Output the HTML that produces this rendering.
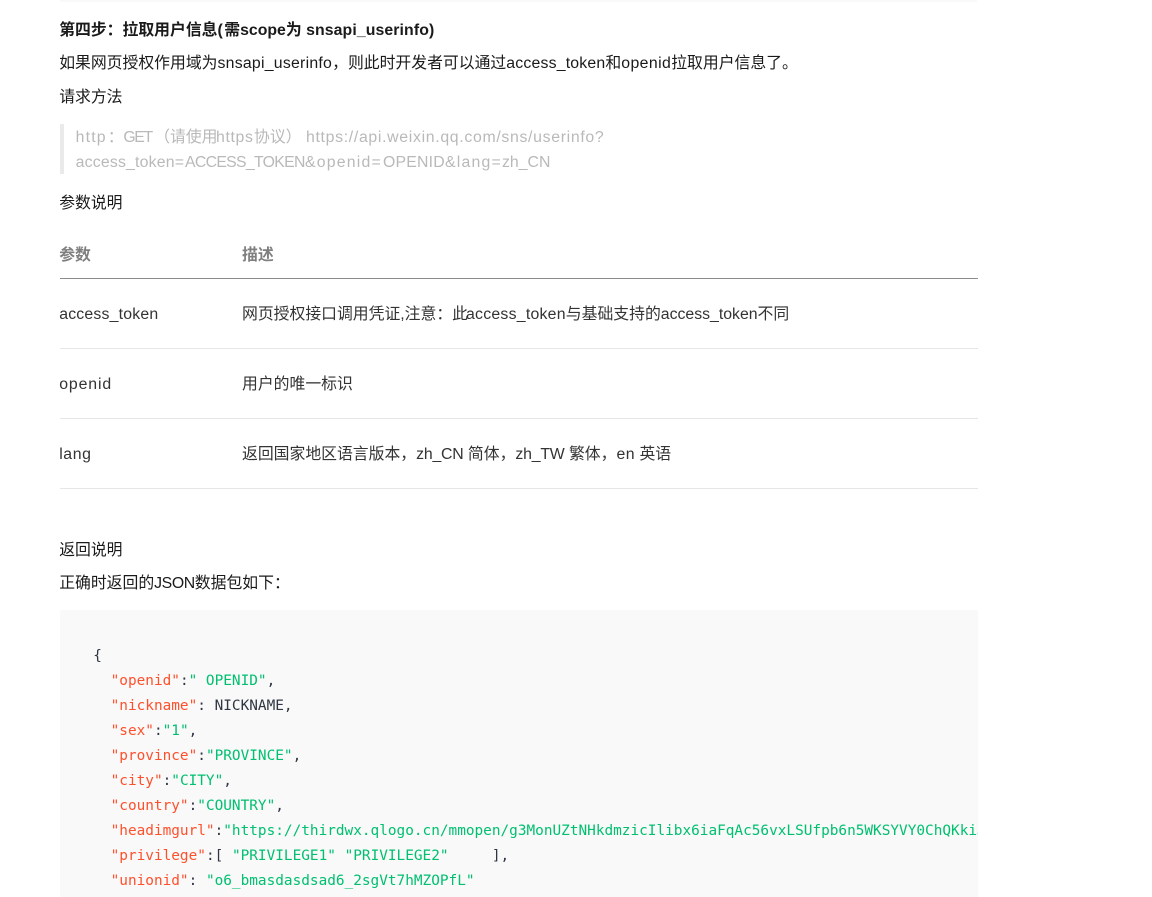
<!DOCTYPE html>
<html><head><meta charset="utf-8">
<style>
html,body{margin:0;padding:0;background:#fff;}
body{width:1152px;height:897px;position:relative;overflow:hidden;font-family:"Liberation Sans","Noto Sans CJK SC",sans-serif;font-size:15.84px;color:#262626;}
.t{position:absolute;white-space:nowrap;line-height:25px;}
.r{position:absolute;left:60px;width:918px;}
.c{position:absolute;left:60px;top:610px;width:918px;height:287px;background:#f9f9f9;overflow:hidden;}
.m{position:absolute;left:33.3px;white-space:pre;font-family:"DejaVu Sans Mono","Liberation Mono",monospace;font-size:14.4px;line-height:25px;color:#2f3542;}
.k{color:#ff502c}.s{color:#00c070}
.g{color:#b9b9b9}
</style></head><body>
<div class="r" style="top:0;width:917px;height:2px;background:#f9f9f9"></div>
<div class="t" style="left:59.2px;top:18px;font-weight:bold;color:#1a1a1a">第四步：拉取用户信息<span style="letter-spacing:1.5px">(</span>需scope为 <span style="letter-spacing:.1px">snsapi_userinfo)</span></div>
<div class="t" style="left:59.2px;top:51px;color:#1a1a1a">如果网页授权作用域为<span style="letter-spacing:.25px">snsapi_userinfo</span>，则此时开发者可以通过<span style="letter-spacing:.2px">access_token</span>和<span style="letter-spacing:.4px">openid</span>拉取用户信息了。</div>
<div class="t" style="left:59.2px;top:85px;color:#1a1a1a">请求方法</div>
<div style="position:absolute;left:60px;top:124px;width:4px;height:50px;background:#eaeaea"></div>
<div class="t g" style="left:75.6px;top:125px;letter-spacing:1.2px">http</div>
<div class="t g" style="left:107.7px;top:125px">：</div>
<div class="t g" style="left:123.4px;top:125px;letter-spacing:-1.4px">GET</div>
<div class="t g" style="left:154.2px;top:125px">（请使用</div>
<div class="t g" style="left:216px;top:125px;letter-spacing:.65px">https</div>
<div class="t g" style="left:254px;top:125px">协议）</div>
<div class="t g" style="left:306px;top:125px;letter-spacing:.68px">https://api.weixin.qq.com/sns/userinfo?</div>
<div class="t g" style="left:75.6px;top:150px;letter-spacing:.2px">access_token=</div>
<div class="t g" style="left:185px;top:150px;letter-spacing:-.7px">ACCESS_TOKEN</div>
<div class="t g" style="left:305px;top:150px;letter-spacing:1.2px">&amp;openid=</div>
<div class="t g" style="left:383px;top:150px;letter-spacing:.2px">OPENID</div>
<div class="t g" style="left:445px;top:150px;letter-spacing:1.2px">&amp;lang=</div>
<div class="t g" style="left:502px;top:150px">zh_CN</div>
<div class="t" style="left:59.2px;top:191px;color:#1a1a1a">参数说明</div>
<div class="t" style="left:59.2px;top:243px;font-weight:bold;color:#7f7f7f">参数</div>
<div class="t" style="left:242px;top:243px;font-weight:bold;color:#7f7f7f">描述</div>
<div class="r" style="top:278px;height:1px;background:#8c8c8c"></div>
<div class="t" style="left:59.2px;top:302px;color:#333;letter-spacing:.2px">access_token</div>
<div class="t" style="left:242px;top:302px;color:#333">网页授权接口调用凭证,注意：此<span style="margin-left:-2px;letter-spacing:.25px">access_token</span>与基础支持的access_token不同</div>
<div class="r" style="top:348px;height:1px;background:#e6e6e6"></div>
<div class="t" style="left:59.2px;top:372px;color:#333;letter-spacing:.9px">openid</div>
<div class="t" style="left:242px;top:372px;color:#333">用户的唯一标识</div>
<div class="r" style="top:418px;height:1px;background:#e6e6e6"></div>
<div class="t" style="left:59.2px;top:442px;color:#333;letter-spacing:.6px">lang</div>
<div class="t" style="left:242px;top:442px;color:#333">返回国家地区语言版本，<span style="letter-spacing:-.2px">zh_CN</span> 简体，<span style="letter-spacing:-.2px">zh_TW</span> 繁体，<span style="letter-spacing:.5px">en</span> 英语</div>
<div class="r" style="top:488px;height:1px;background:#e6e6e6"></div>
<div class="t" style="left:59.2px;top:538px;color:#1a1a1a">返回说明</div>
<div class="t" style="left:59.2px;top:571px;color:#1a1a1a">正确时返回的<span style="letter-spacing:-.4px">JSON</span>数据包如下：</div>
<div class="c">
<div class="m" style="top:34px">{</div>
<div class="m" style="top:59px">  <span class="k">"openid"</span>:<span class="s">" OPENID"</span>,</div>
<div class="m" style="top:84px">  <span class="k">"nickname"</span>: NICKNAME,</div>
<div class="m" style="top:109px">  <span class="k">"sex"</span>:<span class="s">"1"</span>,</div>
<div class="m" style="top:134px">  <span class="k">"province"</span>:<span class="s">"PROVINCE"</span>,</div>
<div class="m" style="top:159px">  <span class="k">"city"</span>:<span class="s">"CITY"</span>,</div>
<div class="m" style="top:184px">  <span class="k">"country"</span>:<span class="s">"COUNTRY"</span>,</div>
<div class="m" style="top:209px">  <span class="k">"headimgurl"</span>:<span class="s">"https://thirdwx.qlogo.cn/mmopen/g3MonUZtNHkdmzicIlibx6iaFqAc56vxLSUfpb6n5WKSYVY0ChQKkiJJSgQ1dZuTOgvLLrhJbERQQ4eMsv84eavHiaiceqxibJxCfHe/46"</span>,</div>
<div class="m" style="top:234px">  <span class="k">"privilege"</span>:[ <span class="s">"PRIVILEGE1"</span> <span class="s">"PRIVILEGE2"</span>     ],</div>
<div class="m" style="top:259px">  <span class="k">"unionid"</span>: <span class="s">"o6_bmasdasdsad6_2sgVt7hMZOPfL"</span></div>
</div>
</body></html>
